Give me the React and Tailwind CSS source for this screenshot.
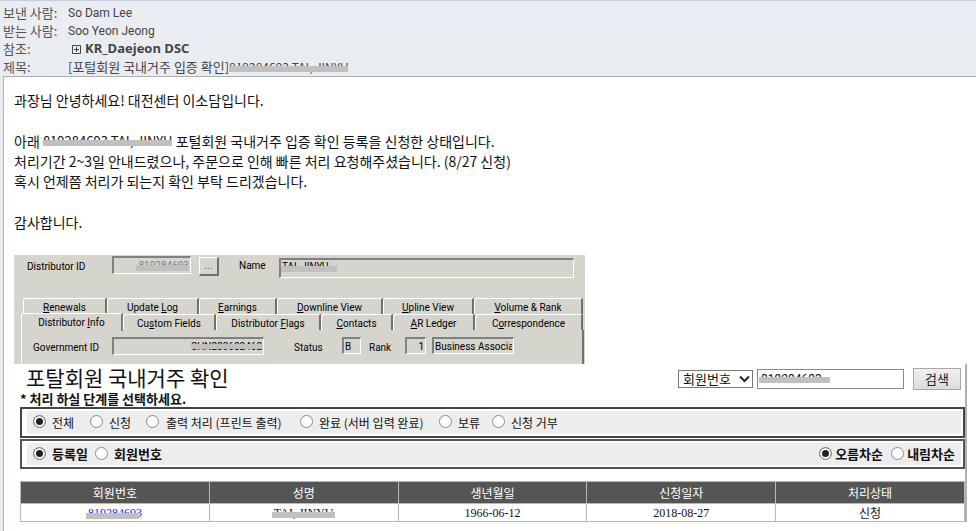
import React from "react";

const KR = "font-['Noto_Sans_CJK_KR',sans-serif]";
const SANS = "font-['Roboto','Liberation_Sans',sans-serif]";
const SERIF = "font-['Liberation_Serif','Noto_Sans_CJK_KR',serif]";

/* Text with a grey strip painted over its lower part. */
function Covered({ children, bar, className = "" }) {
  return (
    <span className={`relative inline-block whitespace-nowrap ${className}`}>
      {children}
      <span aria-hidden="true" className={`absolute bg-[#c0c0c0] ${bar}`} />
    </span>
  );
}

function HeaderRow({ label, children }) {
  return (
    <div className="flex h-[18px] items-center">
      <dt className="w-[65px] shrink-0 text-[13px] text-[#555]">{label}</dt>
      <dd className="flex items-center whitespace-nowrap text-[12px] text-[#444]">{children}</dd>
    </div>
  );
}

/* Sunken grey read-only field of the desktop client. */
function Field({ id, value, className, inputClass = "", bar, label }) {
  return (
    <span className={`relative block border-t-2 border-l-2 border-r border-b border-t-[#808080] border-l-[#808080] border-r-white border-b-white ${className}`}>
      <input
        id={id}
        aria-label={label}
        readOnly
        defaultValue={value}
        className={`block h-full w-full bg-transparent px-px text-[10px] outline-none ${inputClass}`}
      />
      {bar && <span aria-hidden="true" className={`absolute bg-[#c0c0c0] ${bar}`} />}
    </span>
  );
}

function Tab({ pre = "", k, post, active = false }) {
  return (
    <button
      type="button"
      role="tab"
      aria-selected={active}
      className={
        active
          ? "-mb-px flex h-[18px] items-center justify-center rounded-tl-[2px] border-t border-l border-r-2 border-t-white border-l-white border-r-[#808080] bg-[#d6d5cd] whitespace-nowrap"
          : "flex h-4 items-center justify-center self-end rounded-tl-[3px] border-t border-l border-r-2 border-t-white border-l-white border-r-[#707070] pt-[2px] whitespace-nowrap"
      }
    >
      <span>
        {pre}
        <u>{k}</u>
        {post}
      </span>
    </button>
  );
}

function Radio({ name, label, checked, className = "", textClass = "" }) {
  return (
    <label className={`flex items-center whitespace-nowrap ${className}`}>
      <input
        type="radio"
        name={name}
        defaultChecked={checked}
        className="-mt-[2px] size-[13px] shrink-0 appearance-none rounded-full border border-[#8a8a8a] bg-white checked:bg-[#222] checked:shadow-[inset_0_0_0_2px_white]"
      />
      <span className={textClass}>{label}</span>
    </label>
  );
}

function ClientForm() {
  return (
    <section className={`mt-[23px] w-[571px] max-w-full overflow-hidden bg-[#d6d5cd] text-[10px] text-black ${SANS}`}>
      <div className="flex h-[43px] items-start pl-[13px]">
        <label htmlFor="dist" className="mt-[5px] w-[85px] leading-[13px]">Distributor ID</label>
        <Field id="dist" value="819284693" className="mt-px h-[18px] w-[79px]" inputClass="text-right text-[#808080]" bar="left-[22px] top-[7px] h-[6px] w-[53px]" />
        <button type="button" aria-label="Browse" className="mt-[2px] ml-[8px] h-[19px] w-[20px] border-t border-l border-r-2 border-b-2 border-t-white border-l-white border-r-[#707070] border-b-[#707070] text-[11px] leading-[14px] text-[#666]">...</button>
        <label htmlFor="nm" className="mt-1 ml-[20px] w-[40px] leading-[13px]">Name</label>
        <Field id="nm" value="TAI, JINYU" className="mt-[3px] h-[20px] w-[295px]" inputClass="pb-1" bar="left-0 top-[6px] h-[6px] w-[56px]" />
      </div>
      <div role="tablist">
        <div className="ml-[9px] grid grid-cols-[84px_92px_78px_106px_91px_109px]">
          <Tab k="R" post="enewals" />
          <Tab pre="Update " k="L" post="og" />
          <Tab k="E" post="arnings" />
          <Tab k="D" post="ownline View" />
          <Tab k="U" post="pline View" />
          <Tab k="V" post="olume & Rank" />
        </div>
        <div className="-mt-px ml-[7px] grid grid-cols-[102px_93px_105px_72px_82px_108px]">
          <Tab pre="Distributor " k="I" post="nfo" active />
          <Tab pre="Cu" k="s" post="tom Fields" />
          <Tab pre="Distributor " k="F" post="lags" />
          <Tab k="C" post="ontacts" />
          <Tab k="A" post="R Ledger" />
          <Tab pre="C" k="o" post="rrespondence" />
        </div>
      </div>
      <div className="ml-[7px] mr-px flex h-[34px] items-start border-l border-r-2 border-l-white border-r-[#707070] pt-[7px] pl-[11px]">
        <label htmlFor="gov" className="mt-1 w-[79px] leading-[13px] whitespace-nowrap">Government ID</label>
        <Field id="gov" value="CHN283682462" className="h-[18px] w-[152px]" inputClass="text-right" bar="right-0 top-[5px] h-[5px] w-[72px]" />
        <label htmlFor="st" className="mt-1 ml-[30px] w-[48px] leading-[13px]">Status</label>
        <Field id="st" value="B" className="h-[17px] w-[19px]" />
        <label htmlFor="rk" className="mt-1 ml-[8px] w-[36px] leading-[13px]">Rank</label>
        <Field id="rk" value="1" className="h-[17px] w-[21px]" inputClass="text-right" />
        <Field label="Rank name" value="Business Associate" className="ml-[6px] h-[17px] w-[82px]" />
      </div>
    </section>
  );
}

const cell = "border border-[#b8b8b8] p-0 font-normal";

function Portal() {
  return (
    <section className={`-ml-[4px] mr-[9px] border-r-2 border-[#b0b0b0] pl-[10px] ${KR}`}>
      <div className="flex h-[26px] items-center">
        <h1 className="ml-[6px] text-[21px] leading-[26px] whitespace-nowrap">포탈회원 국내거주 확인</h1>
        <form className="mr-1 ml-auto flex items-center pt-[4px]" onSubmit={(e) => e.preventDefault()}>
          <span className="relative block">
            <select aria-label="검색 기준" defaultValue="회원번호" className="block h-[18px] w-[75px] appearance-none border border-[#777] bg-white pl-[4px] text-[13px] leading-[16px]">
              <option>회원번호</option>
              <option>성명</option>
            </select>
            <svg className="pointer-events-none absolute top-[5px] right-[3px]" width="11" height="8" viewBox="0 0 11 8" fill="none" stroke="#222" strokeWidth="2">
              <path d="M1 1.5 5.5 6 10 1.5" />
            </svg>
          </span>
          <span className="relative ml-[4px] block">
            <input aria-label="검색어" defaultValue="819284693" className={`block h-[20px] w-[147px] border border-[#8a8a8a] bg-white px-[3px] text-[12px] outline-none ${SANS}`} />
            <span aria-hidden="true" className="absolute top-[8px] left-[2px] h-[6px] w-[71px] bg-[#c0c0c0]" />
          </span>
          <button type="submit" className="-mt-px ml-[9px] h-[22px] w-[48px] border border-[#a8a8a8] bg-gradient-to-b from-[#f0f0f0] to-[#dcdcdc] text-[13px] leading-[18px] text-[#222]">검색</button>
        </form>
      </div>
      <p className="h-[17px] text-[13px] leading-[17px] font-bold whitespace-nowrap">* 처리 하실 단계를 선택하세요.</p>

      <fieldset className="border-2 border-[#444] p-[2px] pl-[5px]">
        <div className="flex h-[23px] items-center bg-[#ededed] pl-[6px] text-[12px]">
          <Radio name="step" label="전체" checked className="w-[57px]" textClass="ml-[6px]" />
          <Radio name="step" label="신청" className="w-[56px]" textClass="ml-[6px]" />
          <Radio name="step" label="출력 처리 (프린트 출력)" className="w-[154px]" textClass="ml-[7px]" />
          <Radio name="step" label="완료 (서버 입력 완료)" className="w-[139px]" textClass="ml-[6px]" />
          <Radio name="step" label="보류" className="w-[53px]" textClass="ml-[6px]" />
          <Radio name="step" label="신청 거부" textClass="ml-[6px]" />
        </div>
      </fieldset>
      <div className="mt-px flex border-2 border-[#555] p-[2px] pl-[5px]">
        <div className="flex h-[22px] flex-1 items-center bg-[#ededed] pl-[6px] text-[13px] font-bold">
          <Radio name="key" label="등록일" checked className="w-[62px]" textClass="ml-[6px]" />
          <Radio name="key" label="회원번호" textClass="ml-[6px]" />
          <Radio name="dir" label="오름차순" checked className="ml-auto w-[72px]" textClass="ml-[3px]" />
          <Radio name="dir" label="내림차순" className="mr-[6px]" textClass="ml-[3px]" />
        </div>
      </div>

      <table className="mt-[12px] w-full table-fixed border-collapse text-center text-[12px]">
        <thead>
          <tr className="h-[22px] bg-[#555] text-white">
            <th className={cell}>회원번호</th>
            <th className={cell}>성명</th>
            <th className={cell}>생년월일</th>
            <th className={cell}>신청일자</th>
            <th className={cell}>처리상태</th>
          </tr>
        </thead>
        <tbody>
          <tr className={`h-[18px] leading-[16px] ${SERIF}`}>
            <td className={cell}>
              <a href="#member" className="block text-[#1a1aff]"><Covered className="align-top" bar="-left-[2px] top-[8px] h-[6px] w-[53px]">819284693</Covered></a>
            </td>
            <td className={cell}><Covered className="align-top" bar="-left-[2px] top-[7px] h-[6px] w-[63px]">TAI, JINYU</Covered></td>
            <td className={cell}>1966-06-12</td>
            <td className={cell}>2018-08-27</td>
            <td className={`${cell} ${KR}`}>신청</td>
          </tr>
        </tbody>
      </table>
    </section>
  );
}

export default function App() {
  return (
    <div className={`flex min-h-screen flex-col overflow-x-hidden bg-[#e9edf2] ${KR}`}>
      <dl className="border-t border-[#c3cce0] pt-[3px] pl-[3px]">
        <HeaderRow label="보낸 사람:"><span className={SANS}>So Dam Lee</span></HeaderRow>
        <HeaderRow label="받는 사람:"><span className={SANS}>Soo Yeon Jeong</span></HeaderRow>
        <HeaderRow label="참조:">
          <svg className="mr-[4px] ml-[4px]" width="9" height="9" viewBox="0 0 9 9" fill="none" stroke="#444">
            <path d="M.5.5h8v8h-8zM2 4.5h5M4.5 2v5" />
          </svg>
          <b className="font-['Open_Sans',sans-serif] text-[13px]">KR_Daejeon DSC</b>
        </HeaderRow>
        <HeaderRow label="제목:">
          <span className="text-[13px]">[포털회원 국내거주 입증 확인]</span>
          <Covered bar="left-0 top-[8px] h-[6px] w-[119px]">819284693 TAI, JINYU</Covered>
        </HeaderRow>
      </dl>
      <main className="ml-[3px] flex-1 border-t border-l border-[#aab2ba] bg-white pt-[13px] pl-[10px] text-[#111]">
        <div className="flex flex-col gap-[21px] text-[14px] leading-5 whitespace-nowrap">
          <p>과장님 안녕하세요! 대전센터 이소담입니다.</p>
          <p>
            아래 <Covered className="align-top text-[13px]" bar="left-0 top-[9px] h-[6px] w-[129px]">819284693 TAI, JINYU</Covered> 포털회원 국내거주 입증 확인 등록을 신청한 상태입니다.
            <br />
            처리기간 2~3일 안내드렸으나, 주문으로 인해 빠른 처리 요청해주셨습니다. (8/27 신청)
            <br />
            혹시 언제쯤 처리가 되는지 확인 부탁 드리겠습니다.
          </p>
          <p>감사합니다.</p>
        </div>
        <ClientForm />
        <Portal />
      </main>
    </div>
  );
}
